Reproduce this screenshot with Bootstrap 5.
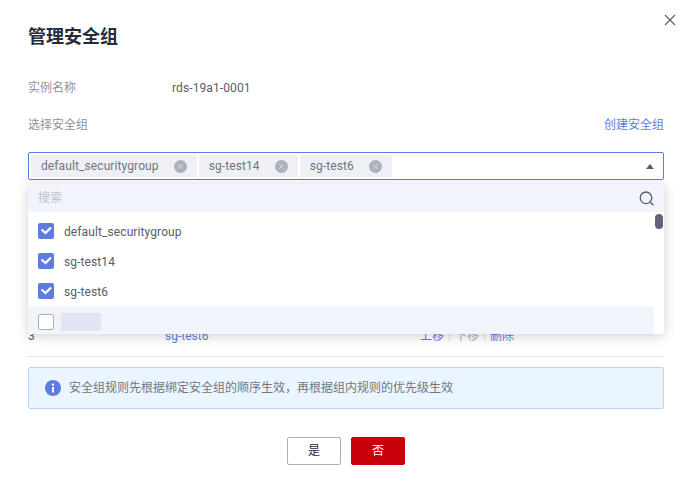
<!DOCTYPE html>
<html lang="zh">
<head>
<meta charset="utf-8">
<title>管理安全组</title>
<link href="https://cdn.jsdelivr.net/npm/bootstrap@5.3.0/dist/css/bootstrap.min.css" rel="stylesheet">
<style>
html,body{height:100%}
body{background:#fff;font-family:Roboto,"Noto Sans CJK SC",sans-serif;font-size:12px;color:#4f5159;overflow:hidden}
.dlg{width:692px;height:492px;padding:0 28px;position:relative}
.dlg-title{font-size:18px;font-weight:700;color:#252b3a;line-height:24px;padding-top:25px;margin:0}
.close-x{position:absolute;top:14px;left:664px;width:12px;height:12px;display:block}
.info-row{height:18px;line-height:18px}
.info-row.first{margin-top:30px}
.info-label{width:144px;color:#8f929b}
.info-val{color:#575d6c;letter-spacing:.1px}
.row-select{margin-top:19px}
.link-blue{color:#5e7ce0;text-decoration:none}
.sel-wrap{position:relative;margin-top:18px}
.sel-box{height:28px;border:1px solid #5e7ce0;border-radius:2px;padding:2px;gap:2px;background:#fff}
.tag-item{height:22px;background:#eef0f5;border-radius:2px;padding-left:10px;color:#71757f;line-height:22px;letter-spacing:.1px}
.tag-x{width:13px;height:13px;margin-left:15px;margin-right:10px;flex:none}
.caret-up{width:0;height:0;border-left:4px solid transparent;border-right:4px solid transparent;border-bottom:5px solid #575d6c;position:absolute;right:10px;top:12px}
.drop-panel{position:absolute;top:32px;left:0;right:0;height:150px;background:#fff;box-shadow:0 2px 12px rgba(37,43,58,.22);border-radius:2px;overflow:hidden;z-index:5}
.search-bar{height:28px;background:#f1f4fb;padding:0 10px;color:#c0c3cb}
.opt-list{padding-top:4px}
.opt{height:30px;padding-left:10px;color:#575d6c;gap:10px;letter-spacing:.1px}
.opt-name{padding-top:2px}
.opt.hov{height:28px;background:#f1f4fb;margin-right:10px}
.chk{width:16px;height:16px;border-radius:2px;background:#5e7ce0;flex:none;display:block}
.chk-empty{width:16px;height:16px;border-radius:2px;background:#fff;border:1px solid #adb0b8;flex:none;display:block}
.blur-name{width:40px;height:18px;background:#e1e4f1;margin-left:-3px}
.thumb{position:absolute;right:1px;top:30px;width:8px;height:15px;border-radius:4px;background:#5f6478}
.rule-row{height:16px;margin-top:148px;line-height:16px;color:#575d6c}
.rule-no{width:137px}
.rule-name{width:255px;color:#5e7ce0}
.rule-ops{gap:4px}
.op-sep{color:#dfe1e6}
.op-off{color:#adb0b8}
.divider{height:1px;background:#dfe1e6;margin-top:12px}
.tip-box{height:42px;margin-top:10px;background:#ebf5ff;border:1px solid #bed1f7;border-radius:2px;padding-left:16px;gap:8px;color:#71757f}
.foot{margin-top:28px;gap:10px}
.btn-no,.btn-yes{width:54px;height:28px;padding:0;font-size:12px;border-radius:2px;line-height:26px}
.btn-yes{background:#fff;border:1px solid #adb0b8;color:#252b3a}
.btn-no{background:#c7000b;border:1px solid #c7000b;color:#fff}
</style>
</head>
<body>
<div class="dlg">
  <svg class="close-x" viewBox="0 0 12 12"><path d="M1 1l10 10M11 1L1 11" stroke="#575d6c" stroke-width="1.2" fill="none"/></svg>
  <h1 class="dlg-title">管理安全组</h1>
  <div class="info-row first d-flex"><span class="info-label">实例名称</span><span class="info-val">rds-19a1-0001</span></div>
  <div class="row-select info-row d-flex justify-content-between"><span class="info-label">选择安全组</span><a class="link-blue" href="#">创建安全组</a></div>
  <div class="sel-wrap">
    <div class="sel-box d-flex">
      <span class="tag-item d-flex align-items-center">default_securitygroup<svg class="tag-x" viewBox="0 0 13 13"><circle cx="6.5" cy="6.5" r="6.5" fill="#adb0b8"/><path d="M4.2 4.2l4.6 4.6M8.8 4.2l-4.6 4.6" stroke="#dfe1e6" stroke-width="1"/></svg></span>
      <span class="tag-item d-flex align-items-center">sg-test14<svg class="tag-x" viewBox="0 0 13 13"><circle cx="6.5" cy="6.5" r="6.5" fill="#adb0b8"/><path d="M4.2 4.2l4.6 4.6M8.8 4.2l-4.6 4.6" stroke="#dfe1e6" stroke-width="1"/></svg></span>
      <span class="tag-item d-flex align-items-center">sg-test6<svg class="tag-x" viewBox="0 0 13 13"><circle cx="6.5" cy="6.5" r="6.5" fill="#adb0b8"/><path d="M4.2 4.2l4.6 4.6M8.8 4.2l-4.6 4.6" stroke="#dfe1e6" stroke-width="1"/></svg></span>
    </div>
    <span class="caret-up"></span>
    <div class="drop-panel">
      <div class="search-bar d-flex align-items-center justify-content-between"><span>搜索</span>
        <svg width="15" height="15" viewBox="0 0 15 15"><circle cx="7" cy="6.8" r="5.8" fill="none" stroke="#575d6c" stroke-width="1.3"/><path d="M11.2 11l3.2 3.2" stroke="#575d6c" stroke-width="1.3"/></svg></div>
      <div class="opt-list">
        <div class="opt d-flex align-items-center"><svg class="chk" viewBox="0 0 16 16"><path d="M3.5 6.5l4 3.5 5.5-5.5" stroke="#fff" stroke-width="2.2" fill="none"/></svg><span class="opt-name">default_securitygroup</span></div>
        <div class="opt d-flex align-items-center"><svg class="chk" viewBox="0 0 16 16"><path d="M3.5 6.5l4 3.5 5.5-5.5" stroke="#fff" stroke-width="2.2" fill="none"/></svg><span class="opt-name">sg-test14</span></div>
        <div class="opt d-flex align-items-center"><svg class="chk" viewBox="0 0 16 16"><path d="M3.5 6.5l4 3.5 5.5-5.5" stroke="#fff" stroke-width="2.2" fill="none"/></svg><span class="opt-name">sg-test6</span></div>
        <div class="opt hov d-flex align-items-center pt-1 pb-0"><span class="chk-empty"></span><span class="blur-name"></span></div>
      </div>
      <span class="thumb"></span>
    </div>
    <div class="rule-row d-flex"><span class="rule-no">3</span><span class="rule-name">sg-test6</span>
      <span class="rule-ops d-flex"><a class="link-blue" href="#">上移</a><span class="op-sep">|</span><span class="op-off">下移</span><span class="op-sep">|</span><a class="link-blue" href="#">删除</a></span></div>
  </div>
  <div class="divider"></div>
  <div class="tip-box d-flex align-items-center">
    <svg width="16" height="16" viewBox="0 0 16 16" class="flex-none"><circle cx="8" cy="8" r="8" fill="#5e7ce0"/><rect x="7" y="7" width="2" height="5.5" fill="#fff"/><circle cx="8" cy="4.6" r="1.2" fill="#fff"/></svg>
    <span>安全组规则先根据绑定安全组的顺序生效，再根据组内规则的优先级生效</span>
  </div>
  <div class="foot d-flex justify-content-center">
    <button class="btn btn-yes" type="button">是</button>
    <button class="btn btn-no" type="button">否</button>
  </div>
</div>
<script src="https://cdn.jsdelivr.net/npm/bootstrap@5.3.0/dist/js/bootstrap.bundle.min.js"></script>
</body>
</html>
